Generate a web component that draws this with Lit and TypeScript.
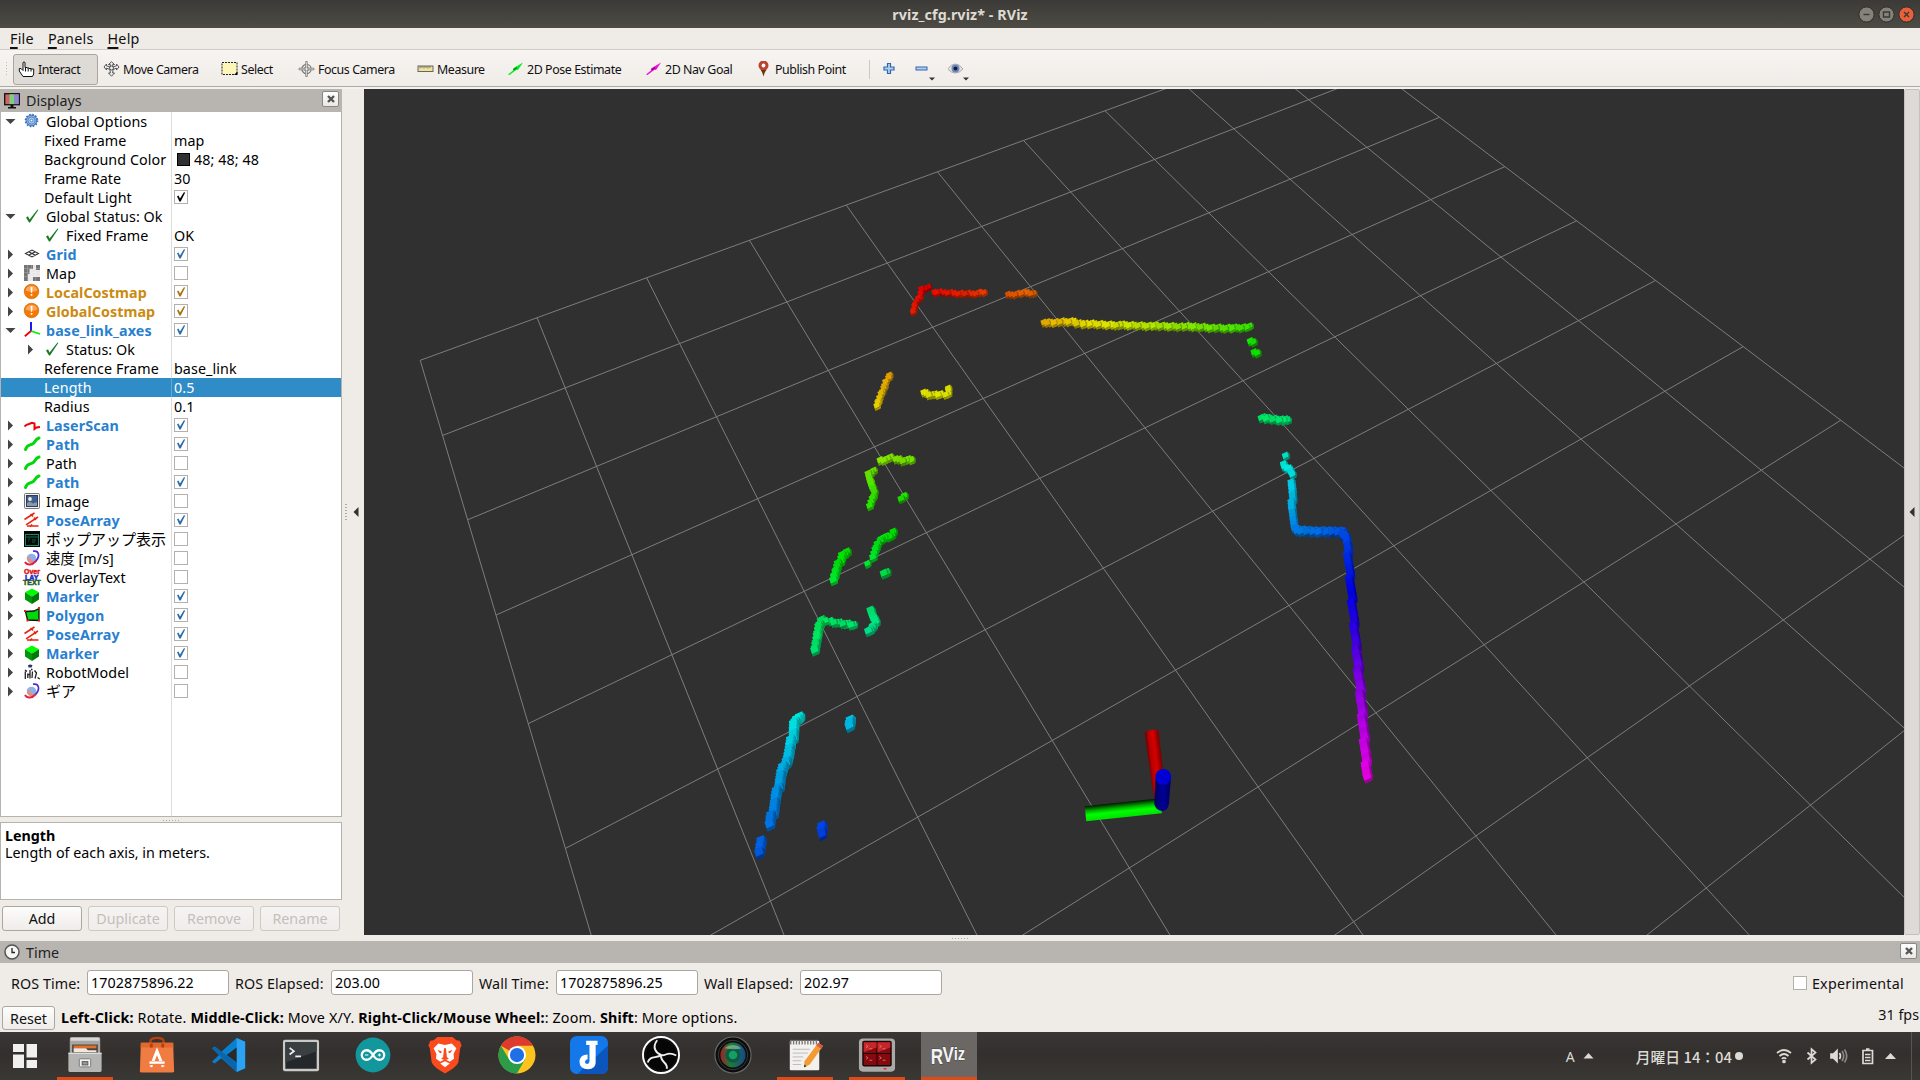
import { LitElement, html, svg, css, nothing } from "lit";
import { customElement } from "lit/decorators.js";
import { classMap } from "lit/directives/class-map.js";

/* ---------- 3D scene ---------- */

type P = [number, number];

// Homography mapping grid cells (i, j) to viewport pixels, from four known nodes.
function solveHomography(src: P[], dst: P[]): number[] {
  const m: number[][] = [];
  src.forEach(([u, v], k) => {
    const [x, y] = dst[k];
    m.push([u, v, 1, 0, 0, 0, -u * x, -v * x, x]);
    m.push([0, 0, 0, u, v, 1, -u * y, -v * y, y]);
  });
  for (let c = 0; c < 8; c++) {
    let p = c;
    for (let r = c; r < 8; r++) if (Math.abs(m[r][c]) > Math.abs(m[p][c])) p = r;
    [m[c], m[p]] = [m[p], m[c]];
    for (let r = 0; r < 8; r++) {
      if (r === c) continue;
      const f = m[r][c] / m[c][c];
      for (let k = c; k < 9; k++) m[r][k] -= f * m[c][k];
    }
  }
  return m.map((row, k) => row[8] / row[k]);
}
const H = solveHomography(
  [[0, 0], [0, 5], [7, 9], [10, 2]],
  [[420.2, 360.3], [565.4, 848.4], [1810.5, 805.1], [1439.5, 117.3]],
);
const project = (i: number, j: number): P => {
  const w = H[6] * i + H[7] * j + 1;
  return [(H[0] * i + H[1] * j + H[2]) / w, (H[3] * i + H[4] * j + H[5]) / w];
};

// Scan strokes: vertices are [x, y, hue]; s is the cube size, d the spacing.
type Stroke = { s: number; d?: number; v: [number, number, number][] };
const strokes: Stroke[] = [
  { s: 7, v: [[929.3, 287.5, 0], [922, 289.8, 0], [920.4, 297, 3], [915, 303.5, 5], [912.5, 312.8, 8]] },
  { s: 7, v: [[933.9, 292.5, 3], [945, 292.6, 5], [961.4, 293.8, 8], [972, 294.2, 11], [985, 292.2, 15]] },
  { s: 7, v: [[1009, 295, 22], [1027.5, 292.8, 25], [1033.5, 294.4, 27]] },
  { s: 7.5, d: 2.9, v: [[1043.5, 322.8, 45], [1074, 321.8, 54], [1076, 323.5, 55], [1104, 324.8, 61], [1143.6, 325.8, 72], [1204, 327.2, 90], [1222, 328.6, 96], [1250, 327.2, 106]] },
  { s: 8, v: [[1250.5, 341.6, 114], [1253.5, 341.9, 114]] },
  { s: 8, v: [[1254, 353.2, 116], [1257, 353.4, 116]] },
  { s: 7.5, v: [[889, 375, 41], [884.6, 388.5, 46], [880, 398, 50], [876.8, 406, 54]] },
  { s: 7.5, v: [[948.2, 388, 60], [947.9, 394, 62], [936, 395.2, 62], [929.3, 395, 61], [924, 392.8, 59]] },
  { s: 8, v: [[911.5, 459.6, 90], [902.5, 460.7, 88], [891.8, 458.4, 86], [881, 461.2, 86]] },
  { s: 8, v: [[874.4, 471, 92], [868.5, 474.6, 92], [871.4, 486, 100], [875, 496, 106], [870.4, 505.5, 110]] },
  { s: 8, v: [[905, 496.8, 112], [901.5, 499, 112]] },
  { s: 8.5, v: [[893.6, 531.5, 121], [892, 536, 121], [881, 539, 123], [877.5, 547, 126], [873.6, 556.7, 131]] },
  { s: 7.5, v: [[867.9, 564.5, 131]] },
  { s: 9, v: [[887, 572.5, 138], [884, 574.5, 139]] },
  { s: 9, v: [[847, 552.5, 118], [841.8, 556, 119], [838.2, 566.7, 124], [833.6, 580.5, 132]] },
  { s: 9, v: [[870.7, 610, 149], [872, 615, 150], [875.2, 622.5, 153], [873.5, 628.3, 156], [869, 632, 158]] },
  { s: 8, v: [[854.5, 625.3, 149], [836.7, 622.8, 147], [823.3, 620.3, 144]] },
  { s: 9.5, v: [[822, 621.3, 144], [819.3, 627, 143], [814, 651.3, 149]] },
  { s: 10.5, d: 2, v: [[801, 717.3, 177], [794.5, 723, 179], [793, 736.7, 184], [788.3, 756.7, 190], [781.7, 773.3, 196], [770, 825.3, 210]] },
  { s: 10.5, d: 2, v: [[850.8, 720.5, 190], [849.2, 726, 191]] },
  { s: 10, d: 2, v: [[821.5, 825, 221], [823, 834, 223]] },
  { s: 10.5, d: 2, v: [[762, 841.5, 214], [759, 853.5, 216]] },
  { s: 8, d: 2, v: [[1261, 418, 146], [1273.3, 419.3, 148], [1287.5, 420.6, 150]] },
  { s: 8, v: [[1285, 455.6, 171]] },
  { s: 8, v: [[1283, 465, 175], [1290, 469.3, 178], [1293, 474, 180]] },
  { s: 8.5, d: 2.4, v: [[1291.7, 483, 185], [1292.7, 510, 195], [1294, 527.5, 206]] },
  { s: 9, d: 1.8, v: [[1295, 528.8, 206], [1300, 531, 208], [1326.7, 531.7, 214], [1341, 531.5, 218], [1347, 537.5, 221], [1348.3, 556.7, 228], [1351.7, 596.7, 241], [1355, 633.3, 252], [1357, 655, 262]] },
  { s: 10, d: 1.8, v: [[1357, 655, 262], [1360, 686.7, 275], [1363.3, 726.7, 287], [1367.4, 777.5, 301]] },
];

type Cube = { x: number; y: number; s: number; h: number; k: number };
function cubes(): Cube[] {
  const out: Cube[] = [];
  let n = 0;
  for (const st of strokes) {
    const step = st.d ?? 3.2;
    const push = (x: number, y: number, h: number) => {
      n++;
      const jx = ((n * 53) % 13) / 13 - 0.5;
      const jy = ((n * 37) % 11) / 11 - 0.5;
      out.push({ x: x + jx * 2, y: y + jy * 1.8, s: st.s, h, k: ((n * 29) % 7) - 3 });
    };
    if (st.v.length === 1) push(...st.v[0]);
    for (let k = 0; k + 1 < st.v.length; k++) {
      const [a, b] = [st.v[k], st.v[k + 1]];
      const len = Math.hypot(b[0] - a[0], b[1] - a[1]);
      const c = Math.max(1, Math.round(len / step));
      for (let t = k ? 1 : 0; t <= c; t++) {
        const f = t / c;
        push(a[0] + (b[0] - a[0]) * f, a[1] + (b[1] - a[1]) * f, a[2] + (b[2] - a[2]) * f);
      }
    }
  }
  return out.sort((p, q) => p.y - q.y);
}

const drawCube = (c: Cube) => {
  const { x, y, h, k } = c;
  const r = c.s / 2;
  const f = (n: number) => n.toFixed(1);
  // top face (bright), front face (dark), right side face (mid)
  return svg`
    <path fill="hsl(${f(h)},100%,${44 + k * 0.5}%)" d="M${f(x - r)} ${f(y - r * 0.5)}L${f(x + r * 0.4)} ${f(y - r * 1.1)}L${f(x + r * 0.8)} ${f(y + r * 0.1)}L${f(x - r * 0.6)} ${f(y + r * 0.8)}Z"/>
    <path fill="hsl(${f(h)},100%,${29 + k}%)" d="M${f(x - r * 0.6)} ${f(y + r * 0.8)}L${f(x + r * 0.8)} ${f(y + r * 0.1)}L${f(x + r * 0.8)} ${f(y + r * 0.8)}L${f(x - r * 0.4)} ${f(y + r * 1.35)}Z"/>
    <path fill="hsl(${f(h)},100%,${32 + k}%)" d="M${f(x + r * 0.4)} ${f(y - r * 1.1)}L${f(x + r)} ${f(y - r * 0.5)}V${f(y + r * 0.6)}L${f(x + r * 0.8)} ${f(y + r * 0.8)}V${f(y + r * 0.1)}Z"/>`;
};

@customElement("scene-view")
class SceneView extends LitElement {
  static styles = css`
    :host { display: block; background: #303030; overflow: hidden; }
    svg { display: block; width: 1540px; height: 846px; }
  `;
  render() {
    const lines = [];
    for (let k = 0; k <= 10; k++) {
      lines.push([project(k, 0), project(k, 10)], [project(0, k), project(10, k)]);
    }
    return html`<svg viewBox="364 89 1540 846">
      <defs>
        <linearGradient id="gr" x1="0" x2="1"><stop offset="0" stop-color="#600"/><stop offset=".25" stop-color="#b80000"/><stop offset=".6" stop-color="#d40000"/><stop offset="1" stop-color="#700"/></linearGradient>
        <linearGradient id="gg" x1="0" y1="0" x2="0" y2="1"><stop offset="0" stop-color="#001800"/><stop offset=".35" stop-color="#00b000"/><stop offset=".6" stop-color="#00ff00"/><stop offset="1" stop-color="#00e000"/></linearGradient>
        <linearGradient id="gb" x1="0" x2="1"><stop offset="0" stop-color="#000058"/><stop offset=".5" stop-color="#000098"/><stop offset="1" stop-color="#000060"/></linearGradient>
      </defs>
      ${lines.map(([a, b]) => svg`<line x1=${a[0]} y1=${a[1]} x2=${b[0]} y2=${b[1]} stroke="#7d7d7d" stroke-width="1"/>`)}
      ${cubes().map(drawCube)}
      <g transform="translate(1151.5 731) rotate(-6.5)"><path fill="url(#gr)" d="M-7 1Q0 -3 7 0L7 70H-5Z"/></g>
      <g transform="translate(1085.5 814) rotate(-6)"><rect fill="url(#gg)" y="-7.8" width="76" height="15"/></g>
      <path fill="url(#gb)" d="M1155.6 777L1154.3 804Q1156 811 1162.5 811Q1168.500 810 1169 803L1171 777Z"/>
      <circle cx="1163.300" cy="776.800" r="7.900" fill="#0000d4"/>
    </svg>`;
  }
}

/* ---------- tree icons (16 x 16) ---------- */

const check = svg`<path d="M2 9.500L4 8.300L5.600 11.500L13.500 1.500L14.300 2L6 14.500H5Z" fill="#1c7a28"/>`;
const marker = svg`<path d="M8 .5L15 4.300L8 8.500L1 4.300Z" fill="#00ff00"/><path d="M1 4.300L8 8.500V16L1 11.500Z" fill="#00950b"/><path d="M15 4.300L8 8.500V16L15 11.500Z" fill="#007a06"/>`;
const path = svg`<path d="M1.500 13.500C3 8.500 5.500 9.500 8.500 8S10.500 3.500 15 2" fill="none" stroke="#00d80b" stroke-width="3" stroke-linecap="round"/>`;
const poses = svg`<g fill="none" stroke="#e8220c" stroke-width="1.500"><path d="M.5 7.500L10.500 1M6.500 2L9 4.500M2 12.800L14 5M10 5.500L12 8M3 14H14.500M8 12.500L6 14.800"/></g>`;
const pie = svg`<circle cx="7.500" cy="8.500" r="4.800" fill="#8db3e6"/><path d="M3.500 6L10 12.500A4.800 4.800 0 0 1 3.200 9Z" fill="#f08a78"/><path d="M9 1.200C15 0 16.500 6 11.500 11.500" fill="none" stroke="#4a2fd8" stroke-width="1.700"/><path d="M12 11C8 15.500 3 15.500 1 12" fill="none" stroke="#e02440" stroke-width="2"/>`;
const warn = svg`<circle cx="7.500" cy="7.500" r="7.300" fill="#f57900" stroke="#c85c00" stroke-width=".6"/><path d="M1.500 6.500A6.200 6.200 0 0 1 13.500 6.500Q8 9 1.500 6.500Z" fill="#fba65a"/><path d="M6.600 3h1.900l-.3 5.800H6.900ZM6.700 10h1.700v1.800H6.700Z" fill="#fff"/>`;

const icons: Record<string, unknown> = {
  gear: svg`<circle cx="7.500" cy="7.500" r="5.400" fill="#86aede" stroke="#3a6fb8" stroke-width="1"/><circle cx="7.500" cy="7.500" r="6" fill="none" stroke="#3a6fb8" stroke-width="1.600" stroke-dasharray="1.570 1.570"/><circle cx="7.500" cy="7.500" r="3.500" fill="#a9c7ec" stroke="#4a7cc2" stroke-width=".8"/><circle cx="7.500" cy="7.500" r="1.300" fill="#fff" stroke="#3a6fb8" stroke-width=".8"/>`,
  check, marker, path, poses, pie, warn,
  grid: svg`<g fill="none" stroke="#333" stroke-width="1.100"><path d="M1.500 7.500L8 4L14.500 7.500L8 11ZM4.700 5.800L11.300 9.300M11.300 5.800L4.700 9.300"/></g>`,
  map: svg`<rect width="16" height="16" fill="#e8e8e8"/><path d="M0 0h9v4H5.500v5H4v7H0ZM12 0h4v5h-4ZM9 12h7v4H9Z" fill="#757575"/><path d="M3.500 0V16M7.500 0V16M11.500 0V16M0 3.500H16M0 7.500H16M0 11.500H16" stroke="#fff" stroke-width=".5" opacity=".4"/>`,
  axes: svg`<g fill="none" stroke-width="1.800"><path d="M7 9V0" stroke="#0000f0"/><path d="M7 9L16 12" stroke="#00f000"/><path d="M7 9L.8 14.200" stroke="#f00000"/></g>`,
  scan: svg`<path d="M.5 9.500L2.500 7.800L5 7L8 5.800L10.500 6.500V12L12.500 10.500L16 10" fill="none" stroke="#f00000" stroke-width="2"/>`,
  image: svg`<rect x=".5" y=".5" width="15" height="15" rx="1" fill="#f2f2ee" stroke="#777"/><rect x="2.500" y="2.500" width="11" height="11" fill="#3f5f94" stroke="#2c3e60"/><circle cx="6" cy="6" r="1.900" fill="#f3f0c8"/><path d="M3 10L6 8.800L9 10.500L13 9V13H3Z" fill="#8d98a8"/>`,
  popup: svg`<rect width="16" height="16" fill="#050808"/><rect x="1.500" y="3.500" width="13" height="11" fill="none" stroke="#1d8a62"/><path d="M1.500 6H14.500" stroke="#156b4c"/><path d="M4 8h2M4 10h1M8 9h4M8 11h3" stroke="#0f5a40"/>`,
  overlay: svg`<text font-family="Liberation Sans" font-weight="bold" font-size="7" letter-spacing="0" stroke-width=".5"><tspan x="0" y="5.300" fill="#e32020" stroke="#e32020">Over</tspan><tspan x="1" y="10.600" fill="#1a2fc8" stroke="#1a2fc8">LAY</tspan><tspan x="-1" y="15.800" fill="#6a2040" stroke="#12702c">TEXT</tspan></text>`,
  polygon: svg`<path d="M1.500 4.500L10 4L15 1.500V13.500L3.500 13Z" fill="#00d80b" stroke="#111" stroke-width="1.300"/><path d="M0 3h2v2H0ZM14 0H16v2h-2ZM14 12.500H16v2h-2ZM2.500 12.500H4.500V14.500H2.500Z" fill="#f02020"/>`,
  robot: svg`<path d="M4 1.200Q6.500 -.5 8.500 1.500L7.500 3.500H4.500Z" fill="#28356e"/><path d="M1 6L3 7.500M1.300 7.500V15M3.800 9.500V14M6 6V14.500M8.500 7.500L8 14M10.500 6.500L12.500 9L11 14.500M3.500 10.500H6M13.500 13.500L15.800 15M7 5.500H8.500" stroke="#222" stroke-width="1.300" fill="none"/>`,
};

type Row = { t: string; l?: number; ic?: string; a?: "o" | "c"; tone?: "on" | "wr"; v?: string; cb?: boolean; sw?: boolean; sel?: boolean; jp?: boolean };
const rows: Row[] = [
  { t: "Global Options", ic: "gear", a: "o" },
  { t: "Fixed Frame", l: 1, v: "map" },
  { t: "Background Color", l: 1, v: "48; 48; 48", sw: true },
  { t: "Frame Rate", l: 1, v: "30" },
  { t: "Default Light", l: 1, cb: true },
  { t: "Global Status: Ok", ic: "check", a: "o" },
  { t: "Fixed Frame", l: 1, ic: "check", v: "OK" },
  { t: "Grid", ic: "grid", a: "c", tone: "on", cb: true },
  { t: "Map", ic: "map", a: "c", cb: false },
  { t: "LocalCostmap", ic: "warn", a: "c", tone: "wr", cb: true },
  { t: "GlobalCostmap", ic: "warn", a: "c", tone: "wr", cb: true },
  { t: "base_link_axes", ic: "axes", a: "o", tone: "on", cb: true },
  { t: "Status: Ok", l: 1, ic: "check", a: "c" },
  { t: "Reference Frame", l: 1, v: "base_link" },
  { t: "Length", l: 1, v: "0.5", sel: true },
  { t: "Radius", l: 1, v: "0.1" },
  { t: "LaserScan", ic: "scan", a: "c", tone: "on", cb: true },
  { t: "Path", ic: "path", a: "c", tone: "on", cb: true },
  { t: "Path", ic: "path", a: "c", cb: false },
  { t: "Path", ic: "path", a: "c", tone: "on", cb: true },
  { t: "Image", ic: "image", a: "c", cb: false },
  { t: "PoseArray", ic: "poses", a: "c", tone: "on", cb: true },
  { t: "ポップアップ表示", ic: "popup", a: "c", cb: false, jp: true },
  { t: "速度 [m/s]", ic: "pie", a: "c", cb: false },
  { t: "OverlayText", ic: "overlay", a: "c", cb: false },
  { t: "Marker", ic: "marker", a: "c", tone: "on", cb: true },
  { t: "Polygon", ic: "polygon", a: "c", tone: "on", cb: true },
  { t: "PoseArray", ic: "poses", a: "c", tone: "on", cb: true },
  { t: "Marker", ic: "marker", a: "c", tone: "on", cb: true },
  { t: "RobotModel", ic: "robot", a: "c", cb: false },
  { t: "ギア", ic: "pie", a: "c", cb: false, jp: true },
];

@customElement("display-tree")
class DisplayTree extends LitElement {
  static styles = css`
    :host { display: flex; flex-direction: column; background: linear-gradient(#ddd, #ddd) 170px 0 / 1px 100% no-repeat #fff; border: 1px solid #b6b2ae; border-top: 0; box-sizing: border-box; }
    .row { display: flex; height: 19px; color: #000; }
    .sel { background: linear-gradient(#62a9d8, #62a9d8) 170px 0 / 1px 100% no-repeat #308cc6; color: #fff; }
    .name { width: 170px; display: flex; align-items: center; box-sizing: border-box; padding-left: 3px; }
    .l1 { padding-left: 23px; }
    .arrow { width: 13px; height: 13px; margin-right: 7px; flex: none; }
    .icon { width: 16px; height: 16px; margin: 0 6px 1px 0; flex: none; overflow: visible; }
    .name.noicon { padding-left: 43px; }
    .name span, .val span { white-space: nowrap; line-height: 19px; letter-spacing: 0.080px; }
    .name .jp { font-size: 15px; letter-spacing: 0; }
    .on .name span { color: #2a7fcf; font-weight: bold; letter-spacing: 0.120px; }
    .wr .name span { color: #cb8a10; font-weight: bold; letter-spacing: 0.050px; }
    .val { display: flex; align-items: center; padding-left: 3px; }
    .sw { width: 11px; height: 11px; background: #303030; border: 1px solid #000; margin: 0 4px 1px 3px; }
    .cb { width: 12px; height: 12px; background: #fff; border: 1px solid #b4b0ac; margin-bottom: 1px; }
    .cb svg { display: block; width: 12px; height: 12px; }
  `;
  render() {
    return rows.map((r) => {
      const ck = r.tone === "on" ? "#2a6cab" : r.tone === "wr" ? "#a8730f" : "#000";
      return html`<div class=${classMap({ row: true, sel: !!r.sel, on: r.tone === "on", wr: r.tone === "wr" })}>
        <div class=${classMap({ name: true, l1: r.l === 1, noicon: !r.ic })}>
          ${r.ic
            ? html`<svg class="arrow" viewBox="0 0 13 13">${r.a === "o" ? svg`<path d="M1.500 4H11.500L6.500 9Z" fill="#444"/>` : r.a === "c" ? svg`<path d="M4 1.500V11.500L9 6.500Z" fill="#444"/>` : nothing}</svg>
                <svg class="icon" viewBox="0 0 16 16">${icons[r.ic]}</svg>`
            : nothing}
          <span class=${classMap({ jp: !!r.jp })}>${r.t}</span>
        </div>
        <div class="val">
          ${r.sw ? html`<i class="sw"></i>` : nothing}
          ${r.cb === undefined
            ? html`<span>${r.v ?? ""}</span>`
            : html`<i class="cb">${r.cb ? html`<svg viewBox="0 0 12 12"><path d="M2 5.200L3.500 4.600L5 7.600L8.900 1.200L10.200 1.500L5.700 10.500H4.400Z" fill=${ck}/></svg>` : nothing}</i>`}
        </div>
      </div>`;
    });
  }
}

/* ---------- toolbar ---------- */

const tools: { t: string; w: number; ic: unknown }[] = [
  { t: "Interact", w: 85, ic: svg`<path d="M4.500 15.500L.8 10V7.500H2.500L4.500 9.500V1.500Q5.500 .3 6.500 1.500V6.500H8.500V7H10.500V7.500H12.500V8H15.200V13L14 15.500Z" fill="#fff" stroke="#111"/><path d="M7 7v3.500M9.700 7.500v3M12.500 8v2.500" stroke="#111"/>` },
  { t: "Move Camera", w: 118, ic: svg`<g fill="#eee" stroke="#555" stroke-width="1"><path d="M8 .8L11 3.500H9.200V6L13 4.800V3L15.500 6L13 9V7.200L9.500 8.500L9.200 12H11L8 15.200L5 12H6.800L6.500 8.500L3 7.200V9L.5 6L3 3V4.800L6.800 6V3.500H5Z"/><circle cx="8" cy="7" r="2"/></g>` },
  { t: "Select", w: 77, ic: svg`<rect x=".5" y="1.500" width="15" height="12" fill="#fcf6b8" stroke="#222" stroke-dasharray="2 1"/><path d="M16 10.500V14H12.500Z" fill="#000"/>` },
  { t: "Focus Camera", w: 119, ic: svg`<g fill="none" stroke="#777"><circle cx="8" cy="8" r="4.600" stroke-width="1.200"/><circle cx="8" cy="8" r="2.200" fill="#ccc"/><path d="M7.200 .5H8.800V7.200H15.500V8.800H8.800V15.500H7.200V8.800H.5V7.200H7.200Z" fill="#eee" stroke-width=".8"/></g>` },
  { t: "Measure", w: 90, ic: svg`<rect x=".5" y="5" width="15" height="5.500" fill="#efe39a" stroke="#666"/><path d="M2.500 5v2.500M4.500 5v2M6.500 5v2.500M8.500 5v2M10.500 5v2.500M12.500 5v2" stroke="#666" stroke-width=".8"/>` },
  { t: "2D Pose Estimate", w: 138, ic: svg`<path d="M.5 13.500L6 9L5.500 7.500L15.500 1.500L10.500 9L9 8.700L2 14Z" fill="#00f020"/><path d="M6 9L9.500 6.500" stroke="#0a7a1a" stroke-width="1.400"/>` },
  { t: "2D Nav Goal", w: 110, ic: svg`<path d="M.5 13.500L6 9L5.500 7.500L15.500 1.500L10.500 9L9 8.700L2 14Z" fill="#f010d8"/><path d="M6 9L9.500 6.500" stroke="#7a0a6e" stroke-width="1.400"/>` },
  { t: "Publish Point", w: 119, ic: svg`<path d="M8 15.500Q7.300 11 4.500 8A5 5 0 1 1 11.500 8Q8.700 11 8 15.500Z" fill="#b8452c"/><path d="M8 15.500Q7.300 11 5.500 9H10.500Q8.700 11 8 15.500Z" fill="#5a3a10"/><circle cx="8" cy="4.500" r="1.900" fill="#fff"/>` },
];

/* ---------- taskbar icons (40 x 40) ---------- */

const shade = "#2b2a28";
const tasks: { run?: boolean; act?: boolean; ic: unknown }[] = [
  { run: true, ic: svg`<path d="M4 3Q4 1 6 1H34Q36 1 36 3V38H4Z" fill="#a6a6a4"/><rect x="5" y="2" width="30" height="3" fill="#d8d8d6"/><rect x="6.500" y="9" width="27" height="9" fill="#48413c"/><path d="M8 10h24v3H8Z" fill="#e0702a"/><path d="M8 13h13l2 2h9v2H8Z" fill="#f2e9dc"/><path d="M2.500 17.500H37.500V36Q37.500 38 35.500 38H4.500Q2.500 38 2.500 36Z" fill="#b5b5b3"/><path d="M2.500 17.500H37.500V19H2.500Z" fill="#ddd"/><rect x="14" y="24" width="12" height="8.500" rx="1" fill="#f2f2f2" stroke="#777"/><rect x="17" y="27" width="6" height="3.500" fill="#999" stroke="#555"/>` },
  { ic: svg`<path d="M13 10V6Q13 2 20 2T27 6V10" fill="none" stroke="#b8400f" stroke-width="2.500"/><path d="M3 7H37L38 37Q38 38.500 36 38.500H4Q2 38.500 2 37Z" fill="#f07c42"/><path d="M3 7H37L37.200 12H2.800Z" fill="#e2682c"/><path d="M14 8v4M26 8v4" stroke="#b8400f" stroke-width="3"/><path d="M13.500 32.500L20 16L26.500 32.500" fill="none" stroke="#fff" stroke-width="3"/><path d="M11.500 28.500H28.500" stroke="#f07c42" stroke-width="4.500"/><path d="M12 28H28" stroke="#fff" stroke-width="2.500"/>` },
  { ic: svg`<path d="M28 2L37 6V34L28 38L12 23.500L5 29L2 27L9.500 20L2 13L5 11L12 16.500Z" fill="#0a7fd0"/><path d="M28 2L37 6V34L28 38Z" fill="#2ba3f2"/><path d="M28 12V28L17.500 20Z" fill="${shade}"/><path d="M5 11L28 28V38L2 13Z" fill="#0966ad"/>` },
  { ic: svg`<rect x="1" y="4" width="38" height="33" rx="2" fill="#c9c9c7"/><rect x="3.500" y="6.500" width="33" height="28" fill="#24282a"/><path d="M3.500 6.500H36.500V16L3.500 28Z" fill="#3a3f42"/><path d="M8 12.500L12.500 16L8 19.500M14 21.500H20" fill="none" stroke="#eee" stroke-width="1.800"/>` },
  { ic: svg`<circle cx="20" cy="20" r="18.300" fill="#12979c"/><path d="M20 20C17.500 16 15.500 15 13.200 15A5 5 0 0 0 13.200 25C15.500 25 17.500 24 20 20C22.500 16 24.500 15 26.800 15A5 5 0 0 1 26.800 25C24.500 25 22.500 24 20 20Z" fill="none" stroke="#fff" stroke-width="2.400"/><path d="M11.500 20h3.500M25 20h3.500M26.800 18.300v3.400" stroke="#fff" stroke-width="1.200"/>` },
  { ic: svg`<path d="M12 1H28L32 4.500L35.500 5L37.500 10L36 13L34 28Q32 33 20 39.500Q8 33 6 28L4 13L2.500 10L4.500 5L8 4.500Z" fill="#fa4a1e"/><path d="M13 8L20 9.500L27 8L32 13L29 19L29.500 24L25 27L20 24.500L15 27L10.500 24L11 19L8 13ZM15 29L20 26.500L25 29L20 33Z" fill="#fff"/><path d="M12 14.500L17 16.500L15 18.500ZM28 14.500L23 16.500L25 18.500ZM19 13h2L22 22L24 24L20 25.500L16 24L18 22Z" fill="#fa4a1e"/>` },
  { ic: svg`<circle cx="20" cy="20" r="19.500" fill="#fcc31e"/><path d="M20 20L3.100 10.250A19.500 19.500 0 0 1 36.900 10.250H20Z" fill="#df3a2e"/><path d="M20 20L28.400 24.700L20 39.500A19.500 19.500 0 0 1 3.100 10.250L11.800 24.700Z" fill="#2b9c48"/><circle cx="20" cy="20" r="9.500" fill="#fff"/><circle cx="20" cy="20" r="7.500" fill="#1f6fe5"/>` },
  { ic: svg`<rect x="0" y="0" width="40" height="40" rx="7" fill="#1478ea"/><path d="M40 10V33Q40 40 33 40H8Z" fill="#0b55bc"/><path d="M17 5H29V9.500H27V28Q27 35 19 35Q10 34.500 10 27Q10.500 19.500 18.500 19.500V24.500Q15 25.500 16 28.500Q19 31 20.500 27V9.500H17Z" fill="#fff"/>` },
  { ic: svg`<circle cx="20" cy="20" r="19" fill="#111" stroke="#fff" stroke-width="2"/><circle cx="20" cy="20" r="16" fill="#060606"/><g fill="none" stroke="#eee" stroke-width="2"><path d="M16 4.500C10 12 15 18 20 20C25 22 26.500 15 36 20.500"/><path d="M20 20C16 24 8 20 6 28M20 20C19 28 28 28 26 34.500"/></g>` },
  { ic: svg`<defs><linearGradient id="ln"><stop offset="0" stop-color="#a02028"/><stop offset=".4" stop-color="#1f7a34"/><stop offset="1" stop-color="#164a8c"/></linearGradient></defs><circle cx="20" cy="20" r="19" fill="#0c0c0c" stroke="#686868" stroke-width="1.200"/><circle cx="20" cy="20" r="15.500" fill="none" stroke="#3a3a3a"/><circle cx="20" cy="20" r="13.200" fill="url(#ln)"/><circle cx="20" cy="20" r="8" fill="#0d5a46"/><circle cx="20" cy="20" r="4.500" fill="#14a060"/><path d="M11 13Q20 6 29 13Q22 15 11 13Z" fill="#b8e0c0" opacity=".5"/>` },
  { run: true, ic: svg`<rect x="4" y="5" width="31" height="31" rx="1" fill="#f2f1ee"/><path d="M5 4v5M8 4v5M11 4v5M14 4v5M17 4v5M20 4v5M23 4v5M26 4v5M29 4v5M32 4v5" stroke="#777" stroke-width="1.400"/><path d="M7 14h18M7 18h16M7 22h11M7 26h9M7 30h9" stroke="#bbb"/><path d="M34 7L39 10.500L25 30L19 33L19.500 26.500Z" fill="#f39a33"/><path d="M34 7L39 10.500L37 13.500L32 10Z" fill="#d65a4a"/><path d="M19.500 30L19 33L21.500 31.800Z" fill="#222"/>` },
  { run: true, ic: svg`<rect x="1" y="2.500" width="38" height="35" rx="4" fill="#a9a9a7"/><rect x="4.500" y="5" width="31" height="27" rx="2" fill="#1a0506"/><path d="M6 6.500H19.500V18H6ZM20.500 6.500H34V18H20.500ZM6 19H19.500V30.500H6ZM20.500 19H34V30.500H20.500Z" fill="#86090e"/><path d="M6 6.500H19.500V12L6 17ZM20.500 6.500H34V12L20.500 17Z" fill="#c4262a"/><path d="M8.500 9.500l2 1.500-2 1.500M22.500 9.500l2 1.500-2 1.500M8.500 21.500l2 1.500-2 1.500M22.500 21.500l2 1.500-2 1.500M12 13.500h3M26 13.500h3M12 25.500h3M26 25.500h3" fill="none" stroke="#e8a0a0" stroke-width=".7"/><path d="M27 34.500h3" stroke="#e22" stroke-width="1.500"/>` },
  { run: true, act: true, ic: svg`<g transform="scale(.78 1)"><text font-family="Liberation Sans" font-weight="bold" fill="#f4f4f4" stroke="#222" stroke-width=".6" paint-order="stroke" letter-spacing="0"><tspan x="1" y="30" font-size="23">R</tspan><tspan x="17" y="27" font-size="23">V</tspan><tspan x="32" y="25" font-size="20">iz</tspan></text></g>` },
];

const fields = [
  { t: "ROS Time:", v: "1702875896.22", w: 76 },
  { t: "ROS Elapsed:", v: "203.00", w: 96 },
  { t: "Wall Time:", v: "1702875896.25", w: 77 },
  { t: "Wall Elapsed:", v: "202.97", w: 96 },
];

const closeX = html`<span class="close"><svg viewBox="0 0 8 8" width="8" height="8"><path d="M1 1L7 7M7 1L1 7" stroke="#555" stroke-width="2.400"/></svg></span>`;

@customElement("app-root")
class AppRoot extends LitElement {
  static styles = css`
    :host { display: flex; flex-direction: column; width: 1920px; height: 1080px; overflow: hidden; background: #efebe7; color: #111; font: 14.3px/19px "Noto Sans", "Open Sans", "Noto Sans CJK JP", sans-serif; letter-spacing: 0; }
    svg { flex: none; }
    .title { height: 28px; background: linear-gradient(#3b3a36, #4d4b44); color: #dfdbd2; font-weight: bold; font-size: 14.300px; display: grid; grid-template-columns: 1fr auto 1fr; align-items: center; }
    .title span { grid-column: 2; letter-spacing: 0.100px; }
    .wins { justify-self: end; display: flex; gap: 3px; padding: 0 5px 0 0; }
    .menu { height: 21px; display: flex; gap: 14px; padding-left: 10px; align-items: center; border-bottom: 1px solid #cfccc8; letter-spacing: 0.250px; }
    u { text-underline-offset: 3px; text-decoration-thickness: 1.500px; }
    .tools { height: 37px; box-sizing: border-box; border-bottom: 1px solid #aeaaa5; background: linear-gradient(#f7f4f1, #f0ece8); display: flex; align-items: center; padding: 2px 0 0 13px; font-size: 12.400px; }
    .grip { width: 4px; height: 16px; margin-left: -8px; margin-right: 4px; background: radial-gradient(circle, #bbb 0.800px, transparent 1px) 0 0 / 3px 3px; }
    .tool { display: flex; align-items: center; gap: 3px; height: 31px; box-sizing: border-box; padding-left: 5px; white-space: nowrap; }
    .tool.down { background: #dedad6; border: 1px solid #a9a5a1; border-radius: 3px; padding-left: 4px; }
    .sep { width: 1px; height: 19px; background: #ccc8c4; margin-right: 12px; }
    .tool .lb { letter-spacing: -0.420px; }
    .ib { margin-right: 15px; }
    .ib.m { margin-right: 11px; }
    .gap { height: 2px; background: #f4f2ef; }
    .main { display: flex; height: 846px; }
    .left { width: 342px; display: flex; flex-direction: column; }
    .head { height: 23px; box-sizing: border-box; background: #b8b4b0; display: flex; align-items: center; gap: 6px; padding-left: 4px; }
    .head span.h { flex: 1; color: #222; }
    .close { width: 17px; height: 16px; box-sizing: border-box; border: 1px solid #888; border-radius: 2px; background: linear-gradient(#fff, #ebe8e4); display: grid; place-items: center; margin: -3px 3px 0 0; }
    display-tree { height: 705px; }
    .split { height: 5px; display: grid; place-items: center; }
    .dots { width: 18px; height: 2px; background: radial-gradient(circle, #aaa 0.700px, transparent 1px) 0 0 / 3px 3px; }
    .desc { height: 78px; box-sizing: border-box; border: 1px solid #b6b2ae; background: #fff; padding: 4px; color: #000; line-height: 17px; }
    .desc p { margin: 0; }
    .btns { display: flex; gap: 6px; padding: 6px 2px 0; }
    .btn { width: 80px; height: 25px; box-sizing: border-box; border: 1px solid #aaa6a1; border-radius: 3px; background: linear-gradient(#fdfdfc, #efecea); text-align: center; line-height: 23px; }
    .off { color: #c3bfbb; border-color: #cdc9c5; background: linear-gradient(#f6f4f2, #efecea); }
    .vs { width: 22px; box-sizing: border-box; padding-left: 3px; display: flex; align-items: center; gap: 6px; }
    .vd { width: 2px; height: 18px; background: radial-gradient(circle, #aaa 0.700px, transparent 1px) 0 0 / 2px 3px; }
    .right { width: 16px; box-sizing: border-box; border: 1px solid #c4c0bc; border-radius: 2px; background: #dedad7; display: flex; align-items: center; padding-left: 4px; }
    scene-view { width: 1540px; }
    .hs { height: 6px; display: grid; place-items: center; }
    .th { height: 22px; flex: none; }
    .time { display: flex; align-items: center; height: 39px; padding: 0 16px 0 11px; }
    .time .lab { white-space: nowrap; padding-top: 2px; letter-spacing: 0.080px; }
    .inp { width: 142px; height: 25px; box-sizing: border-box; border: 1px solid #aaa6a1; border-radius: 3px; background: #fff; margin-right: 6px; padding-left: 3px; line-height: 23px; color: #000; letter-spacing: 0.060px; }
    .exp { margin-left: auto; display: flex; align-items: center; gap: 5px; padding-top: 2px; letter-spacing: 0.250px; }
    .box { width: 12px; height: 12px; border: 1px solid #b4b0ac; background: #fff; margin-bottom: 2px; }
    .stat { display: flex; height: 30px; align-items: flex-start; padding: 4px 1px 0 2px; box-sizing: border-box; }
    .reset { width: 53px; height: 24px; margin-right: 6px; line-height: 24px; }
    .hint { flex: 1; color: #000; line-height: 23px; letter-spacing: 0.170px; }
    .fps { line-height: 18px; letter-spacing: 0; }
    .bar { height: 48px; display: flex; background: linear-gradient(#3a3635, #322f2d 45%, #3a3834); color: #dcdad5; }
    .start { width: 49px; display: grid; place-items: center; }
    .task { width: 56px; margin: 0 8px; box-sizing: border-box; height: 48px; display: grid; place-items: center; border-bottom: 3px solid transparent; }
    .run { border-bottom-color: #e04a14; }
    .act { background-color: #6a6765; }
    .tray { margin-left: auto; display: flex; align-items: center; padding-right: 8px; font-size: 14px; }
    .clock { margin: 0 33px 0 42px; white-space: nowrap; font: 500 14.800px "Noto Sans CJK JP", sans-serif; display: flex; align-items: center; gap: 3px; }
    .dot { width: 8px; height: 8px; border-radius: 50%; background: #dcdad5; }
    .edge { width: 1px; height: 48px; background: #555; margin-left: 10px; }
    .tri { margin-left: 8px; }
  `;

  render() {
    const tri = html`<svg class="tri" width="11" height="8" viewBox="0 0 11 8"><path d="M.5 6.500L5.500 1L10.500 6.500Z" fill="#dcdad5"/></svg>`;
    return html`
      <div class="title"><span>rviz_cfg.rviz* - RViz</span>
        <div class="wins">${[0, 1, 2].map((k) => html`<svg width="17" height="17" viewBox="0 0 17 17"><circle cx="8.500" cy="8.500" r="7.600" fill=${k === 2 ? "#e8603a" : "#85827a"} stroke="#2e2d2a"/><path d=${["M5.500 8.500H11.500", "M5.500 6H11.500V11H5.500Z", "M6 6L11 11M11 6L6 11"][k]} fill="none" stroke="#3a3834" stroke-width="1.400"/></svg>`)}</div>
      </div>
      <div class="menu"><span><u>F</u>ile</span><span><u>P</u>anels</span><span><u>H</u>elp</span></div>
      <div class="tools"><i class="grip"></i>
        ${tools.map((t, k) => html`<div class=${classMap({ tool: true, down: k === 0 })} style="width:${t.w}px"><svg width="17" height="16" viewBox="0 0 16 16">${t.ic}</svg><span class="lb">${t.t}</span></div>`)}
        <i class="sep"></i>
        <svg class="ib" width="18" height="24" viewBox="0 0 18 24"><path d="M4 10.500H7.500V7H10.500V10.500H14V13.500H10.500V17H7.500V13.500H4Z" fill="#b4cdec" stroke="#2e68b0" stroke-width="1.200" transform="translate(-2 -.500)"/></svg>
        <svg class="ib m" width="22" height="24" viewBox="0 0 22 24"><rect x="1" y="10" width="11" height="3" fill="#b4cdec" stroke="#2e68b0"/><path d="M14 20.500h6l-3 3Z" fill="#333"/></svg>
        <svg width="24" height="24" viewBox="0 0 24 24"><path d="M-.5 12Q7.500 2 15 12Q7.500 20 -.5 12Z" fill="#e4e4e4" stroke="#aaa"/><circle cx="7.500" cy="11.500" r="4" fill="#6f86bd"/><circle cx="7.500" cy="11.500" r="2" fill="#151c38"/><path d="M15 20.500h6l-3 3Z" fill="#333"/></svg>
      </div>
      <div class="gap"></div>
      <div class="main">
        <div class="left">
          <div class="head">
            <svg width="16" height="16" viewBox="0 0 16 16"><rect x=".7" y=".7" width="14.600" height="11" fill="#c66" stroke="#111" stroke-width="1.300"/><rect x="5.500" y="1.300" width="4.800" height="9.800" fill="#7fcf7f"/><rect x="10.300" y="1.300" width="4.400" height="9.800" fill="#8a86d8"/><path d="M6.500 12h3v2H12v1.500H4V14h2.500Z" fill="#111"/></svg>
            <span class="h">Displays</span>${closeX}
          </div>
          <display-tree></display-tree>
          <div class="split"><i class="dots"></i></div>
          <div class="desc"><p><b>Length</b></p><p>Length of each axis, in meters.</p></div>
          <div class="btns"><div class="btn">Add</div><div class="btn off">Duplicate</div><div class="btn off">Remove</div><div class="btn off">Rename</div></div>
        </div>
        <div class="vs"><i class="vd"></i><svg width="6" height="10" viewBox="0 0 6 10"><path d="M5.500 0V10L.5 5Z" fill="#333"/></svg></div>
        <scene-view></scene-view>
        <div class="right"><svg width="6" height="10" viewBox="0 0 6 10"><path d="M5.500 0V10L.5 5Z" fill="#333"/></svg></div>
      </div>
      <div class="hs"><i class="dots"></i></div>
      <div class="head th">
        <svg width="16" height="16" viewBox="0 0 16 16"><circle cx="8" cy="8" r="7" fill="#f6f6f4" stroke="#555" stroke-width="1.500"/><path d="M8 4V8.500H11" fill="none" stroke="#222" stroke-width="1.300"/></svg>
        <span class="h">Time</span>${closeX}
      </div>
      <div class="time">
        ${fields.map((f) => html`<span class="lab" style="width:${f.w}px">${f.t}</span><div class="inp">${f.v}</div>`)}
        <div class="exp"><i class="box"></i>Experimental</div>
      </div>
      <div class="stat"><div class="btn reset">Reset</div>
        <div class="hint"><b>Left-Click:</b> Rotate. <b>Middle-Click:</b> Move X/Y. <b>Right-Click/Mouse Wheel:</b>: Zoom. <b>Shift</b>: More options.</div>
        <span class="fps">31 fps</span>
      </div>
      <div class="bar">
        <div class="start"><svg width="26" height="26" viewBox="0 0 26 26"><path d="M1 1H12V9H1ZM1 11.500H12V25H1ZM14.500 1H25V14.500H14.500ZM14.500 17H25V25H14.500Z" fill="#f0f0ee"/></svg></div>
        ${tasks.map((t) => html`<div class=${classMap({ task: true, run: !!t.run, act: !!t.act })}><svg width="38" height="38" viewBox="0 0 40 40">${t.ic}</svg></div>`)}
        <div class="tray"><span>A</span>${tri}
          <span class="clock">月曜日 14：04<i class="dot"></i></span>
          <svg width="125" height="20" viewBox="0 0 125 20" fill="none" stroke="#dcdad5" stroke-width="1.700">
            <path d="M1 7Q8 1 15 7M3.500 10Q8 6 12.500 10M5.800 12.800Q8 11 10.200 12.800"/><circle cx="8" cy="15.500" r="1" fill="#dcdad5"/>
            <path d="M31.500 6.500L39.500 13.500L35.500 17V3L39.500 6.500L31.500 13.500"/>
            <path d="M55 8H57.500L61 4.500V15.500L57.500 12H55Z" fill="#dcdad5"/><path d="M63.500 7Q65.500 10 63.500 13"/><path d="M66 5Q69.500 10 66 15M68.500 3.500Q73 10 68.500 16.500" stroke="#8a8884"/>
            <path d="M87 4.500H96.500V17.500H87ZM90 3H93.500"/><path d="M89 8.500h5.500M89 11.500h5.500M89 14.500h5.500" stroke-width="1.500"/>
            <path d="M109 13L114.500 7L120 13Z" fill="#dcdad5" stroke="none"/>
          </svg><i class="edge"></i>
        </div>
      </div>`;
  }
}
